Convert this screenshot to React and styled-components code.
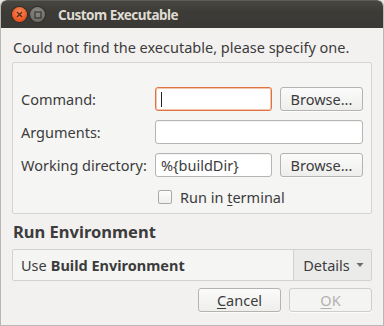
import React from "react";
import styled, { createGlobalStyle } from "styled-components";

const Global = createGlobalStyle`
  html, body { margin: 0; padding: 0; background: #e6e6e4; }
  body { font-family: "Noto Sans", "Open Sans", sans-serif; font-size: 14.5px; color: #3c3c3c; }
  * { box-sizing: border-box; }
`;

const Window = styled.div`
  width: 384px;
  height: 326px;
  display: flex;
  flex-direction: column;
  background: #f2f1f0;
  border-radius: 6px 6px 0 0;
  border: 1px solid #b9b8b5;
  border-top: none;
  overflow: hidden;
`;

const TitleBar = styled.div`
  height: 28px;
  flex: none;
  display: flex;
  align-items: center;
  padding-left: 11px;
  gap: 3px;
  background: linear-gradient(#48473f, #3c3b37 40%, #3a3935);
  border-top: 1px solid #5d5c57;
  border-radius: 6px 6px 0 0;
`;

const WinBtn = styled.div`
  width: 15px;
  height: 15px;
  border-radius: 50%;
  display: flex;
  align-items: center;
  justify-content: center;
  background: ${(p) =>
    p.$close
      ? "radial-gradient(circle at 50% 35%, #f88a5c, #e9541e 70%, #c9431a)"
      : "radial-gradient(circle at 50% 35%, #8c8b86, #6f6e69 70%, #5c5b57)"};
  box-shadow: 0 0 0 1px #2f2e2b;
`;

const Title = styled.div`
  margin-left: 10px;
  color: #dfdbd2;
  font-weight: bold;
  font-size: 13.5px;
  letter-spacing: -0.5px;
`;

const Body = styled.div`
  flex: 1;
  display: flex;
  flex-direction: column;
  padding: 0 11px 0 11px;
`;

const Message = styled.div`
  height: 34px;
  padding-top: 3px;
  display: flex;
  align-items: center;
  padding-left: 1px;
  color: #3c3c3c;
`;

const GroupBox = styled.div`
  border: 1px solid #d5d4d1;
  border-radius: 2px;
  background: #f5f5f4;
  padding: 24px 9px 9px 8px;
  display: grid;
  grid-template-columns: 126px 117px 83px;
  column-gap: 8px;
  row-gap: 9px;
  align-items: center;
`;

const Label = styled.div`
  color: #3c3c3c;
  white-space: nowrap;
`;

const Input = styled.div`
  height: 24px;
  border: 1px solid ${(p) => (p.$focus ? "#e0733f" : "#b6b5b2")};
  border-radius: 3px;
  background: #ffffff;
  display: flex;
  align-items: center;
  padding-left: 5px;
  grid-column: ${(p) => (p.$wide ? "2 / 4" : "auto")};
  box-shadow: ${(p) => (p.$focus ? "inset 0 0 0 1px #f3c4ad" : "inset 0 1px 1px rgba(0,0,0,0.05)")};
  color: #3c3c3c;
`;

const Caret = styled.div`
  width: 1px;
  height: 15px;
  background: #222;
`;

const Button = styled.div`
  height: 24px;
  border: 1px solid ${(p) => (p.$disabled ? "#cfcecb" : "#b4b3b0")};
  border-radius: 3px;
  background: ${(p) => (p.$disabled ? "#f4f4f3" : "linear-gradient(#fbfbfb, #eeeeec)")};
  color: ${(p) => (p.$disabled ? "#b3b2af" : "#3c3c3c")};
  display: flex;
  align-items: center;
  justify-content: center;
  box-shadow: 0 1px 0 rgba(255,255,255,0.8);
`;

const Mnemonic = styled.span`
  text-decoration: underline;
  text-underline-offset: 2px;
`;

const CheckRow = styled.div`
  grid-column: 2 / 4;
  height: 14px;
  margin-top: 4px;
  display: flex;
  align-items: center;
  gap: 8px;
  padding-left: 3px;
`;

const CheckBox = styled.div`
  width: 14px;
  height: 14px;
  flex: none;
  border: 1px solid #a9a8a5;
  border-radius: 2px;
  background: linear-gradient(#fdfdfd, #efefee);
`;

const Heading = styled.div`
  font-weight: bold;
  font-size: 16.5px;
  color: #3c3c3c;
  height: 35px;
  display: flex;
  align-items: center;
  padding-left: 1px;
`;

const EnvBox = styled.div`
  height: 32px;
  border: 1px solid #d3d2cf;
  border-radius: 2px;
  background: #f5f5f4;
  display: flex;
`;

const EnvText = styled.div`
  flex: 1;
  display: flex;
  align-items: center;
  padding-left: 8px;
  gap: 4px;
  b { font-weight: bold; }
`;

const DetailsBtn = styled.div`
  width: 78px;
  border-left: 1px solid #d3d2cf;
  background: #ebebea;
  display: flex;
  align-items: center;
  justify-content: center;
  gap: 6px;
  padding-left: 2px;
`;

const Footer = styled.div`
  display: flex;
  justify-content: flex-end;
  gap: 8px;
  padding: 7px 0 0 0;
`;

const FooterButton = styled(Button)`
  width: 83px;
`;

export default function App() {
  return (
    <>
      <Global />
      <Window>
        <TitleBar>
          <WinBtn $close>
            <svg width="7" height="7" viewBox="0 0 7 7">
              <path d="M1 1L6 6M6 1L1 6" stroke="#5a2a16" strokeWidth="1.4" />
            </svg>
          </WinBtn>
          <WinBtn>
            <svg width="8" height="8" viewBox="0 0 8 8">
              <rect x="1" y="1" width="6" height="6" fill="none" stroke="#3d3c38" strokeWidth="1.3" />
            </svg>
          </WinBtn>
          <Title>Custom Executable</Title>
        </TitleBar>
        <Body>
          <Message>Could not find the executable, please specify one.</Message>
          <GroupBox>
            <Label>Command:</Label>
            <Input $focus>
              <Caret />
            </Input>
            <Button>Browse...</Button>
            <Label>Arguments:</Label>
            <Input $wide />
            <Label>Working directory:</Label>
            <Input>%{"{"}buildDir{"}"}</Input>
            <Button>Browse...</Button>
            <CheckRow>
              <CheckBox />
              <span>
                Run in <Mnemonic>t</Mnemonic>erminal
              </span>
            </CheckRow>
          </GroupBox>
          <Heading>Run Environment</Heading>
          <EnvBox>
            <EnvText>
              Use <b>Build Environment</b>
            </EnvText>
            <DetailsBtn>
              Details
              <svg width="8" height="6" viewBox="0 0 8 6">
                <path d="M0.5 1L7.5 1L4 5Z" fill="#6b6a66" />
              </svg>
            </DetailsBtn>
          </EnvBox>
          <Footer>
            <FooterButton>
              <span>
                <Mnemonic>C</Mnemonic>ancel
              </span>
            </FooterButton>
            <FooterButton $disabled>
              <span>
                <Mnemonic>O</Mnemonic>K
              </span>
            </FooterButton>
          </Footer>
        </Body>
      </Window>
    </>
  );
}
